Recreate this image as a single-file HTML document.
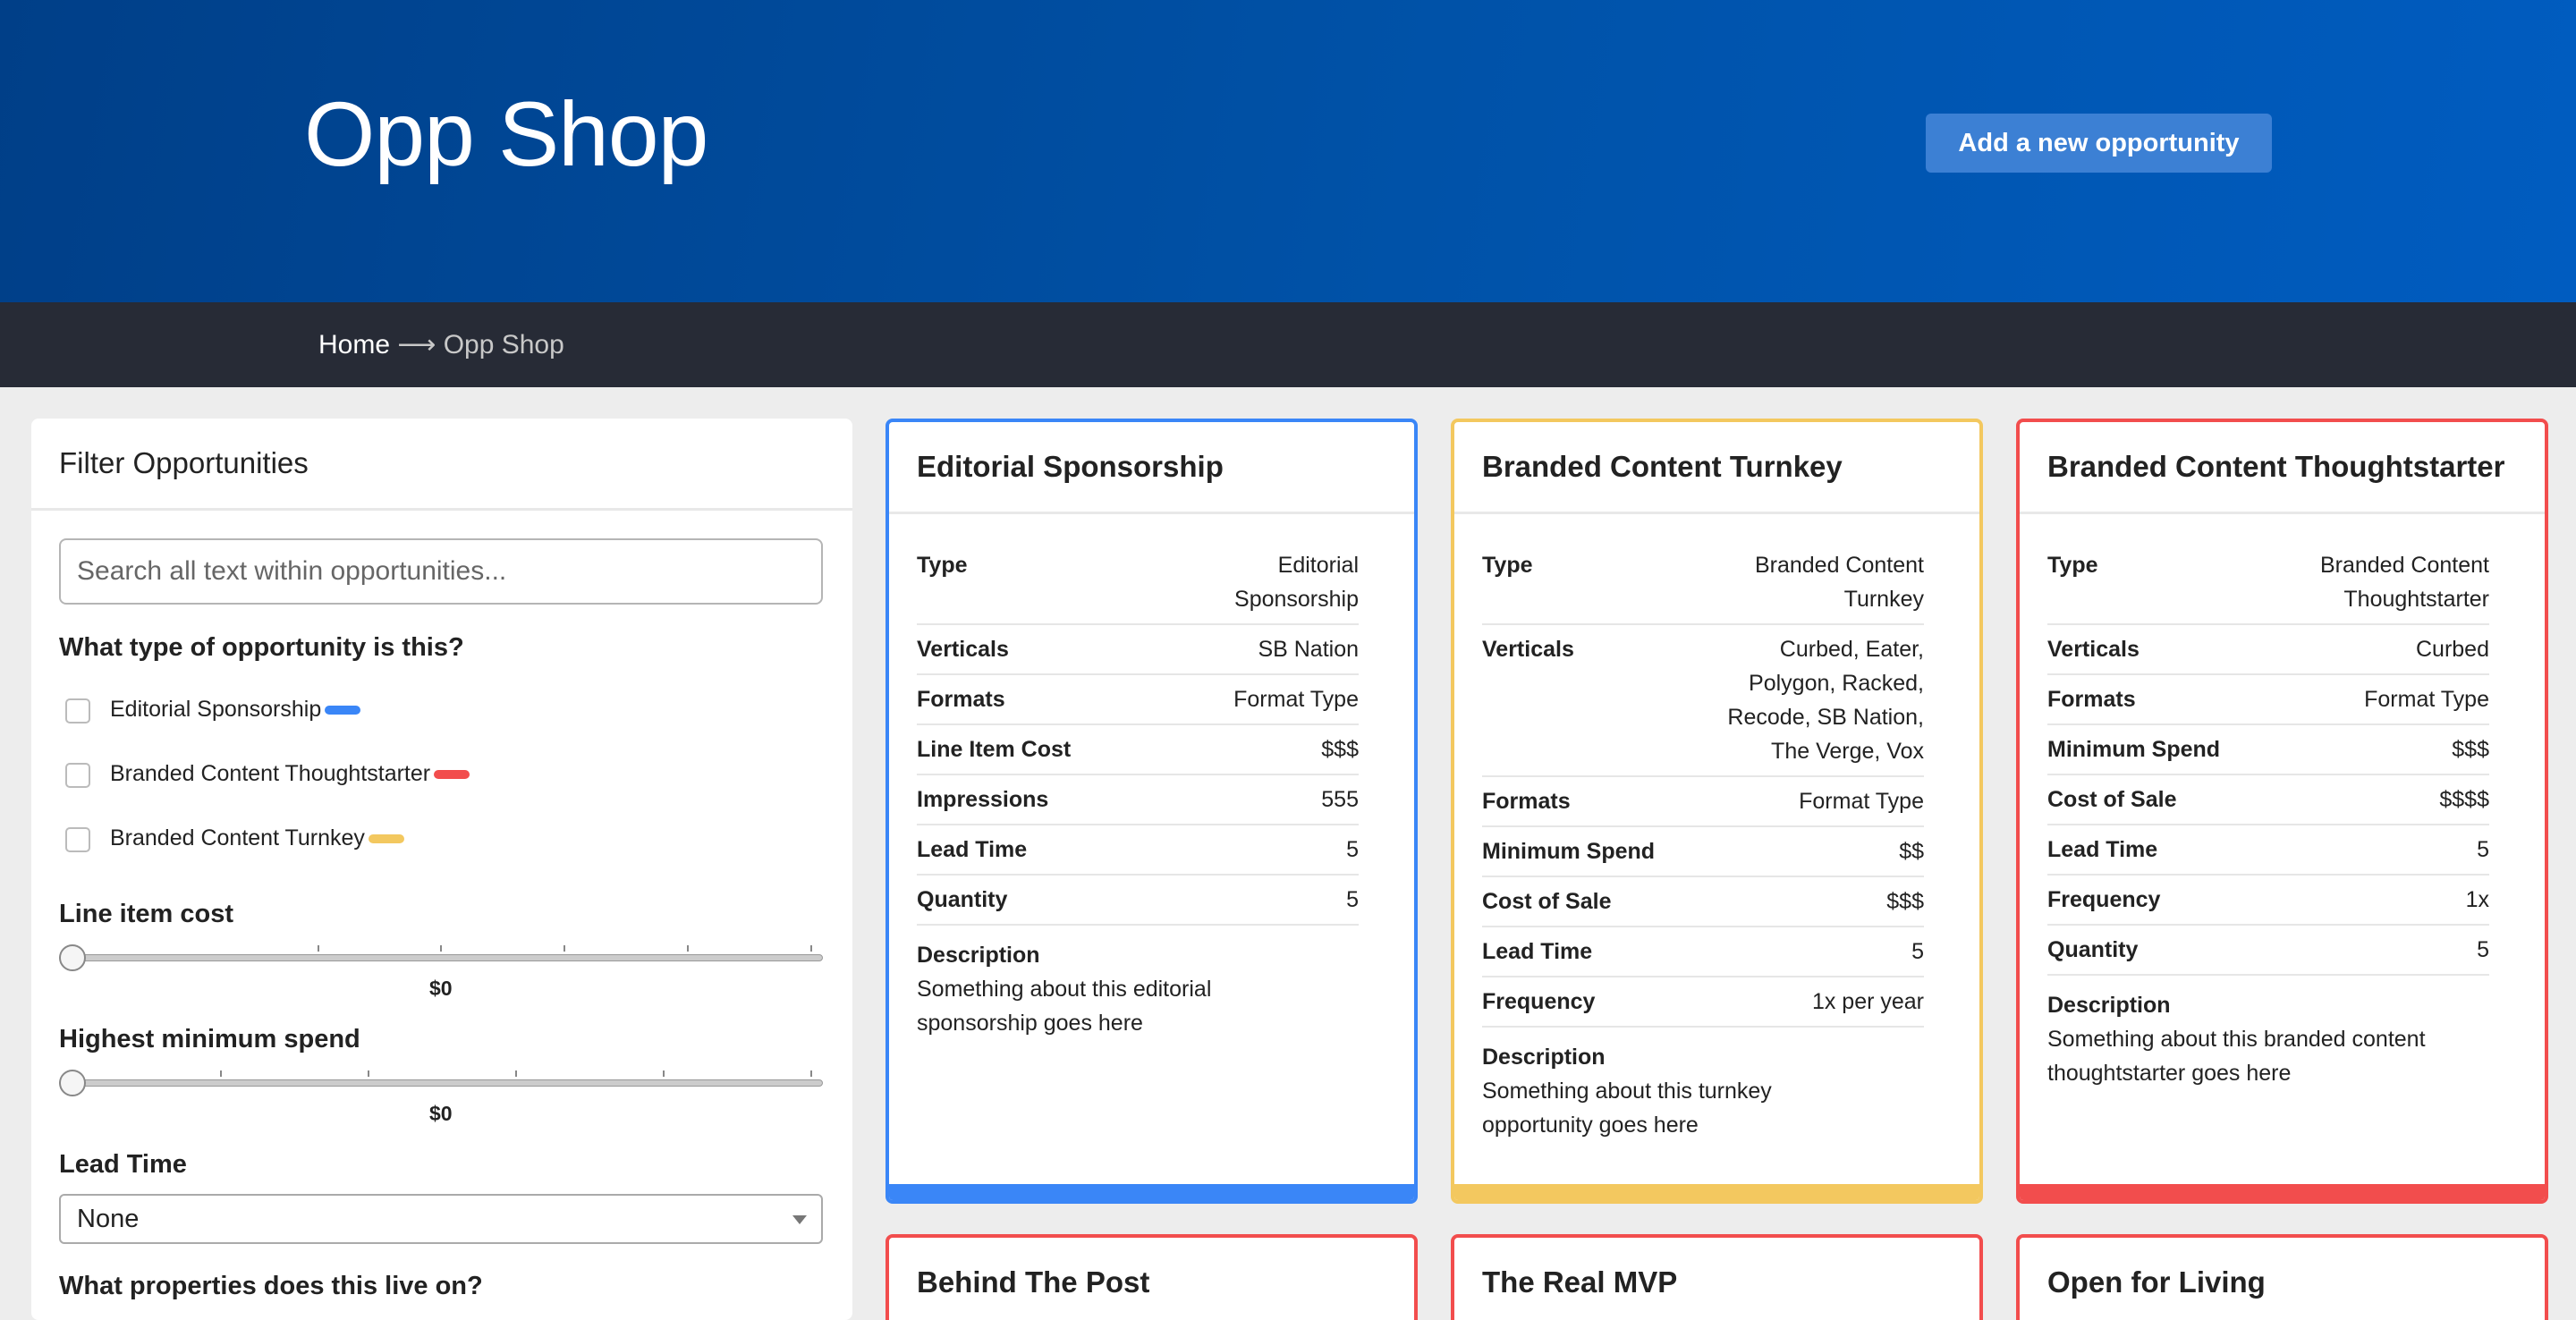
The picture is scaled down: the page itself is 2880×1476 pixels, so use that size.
<!DOCTYPE html>
<html><head><meta charset="utf-8"><style>
*{box-sizing:border-box;margin:0;padding:0}
html,body{width:2880px;height:1476px;overflow:hidden}
body{background:#ededed;font-family:"Liberation Sans",sans-serif;color:#222;position:relative}
.hdr{height:338px;background:linear-gradient(100deg,#003f88 0%,#0052a8 55%,#005cc0 100%);position:relative}
.hdr h1{position:absolute;left:340px;top:92px;font-weight:300;font-size:102px;color:#fff;letter-spacing:-1px}
.btn{position:absolute;left:2153px;top:127px;width:387px;height:66px;background:#3c80d4;border-radius:6px;color:#fff;font-weight:bold;font-size:29px;text-align:center;line-height:66px}
.nav{height:95px;background:#272b36;color:#fff;font-size:30px;line-height:95px;padding-left:356px}
.nav span{color:#c8c8c8}
.side{position:absolute;left:35px;top:468px;width:918px;height:1100px;background:#fff;border-radius:8px}
.side .sh{height:103px;border-bottom:3px solid #e8e8e8;font-size:33px;line-height:100px;padding-left:31px}
.inp{position:absolute;left:31px;top:134px;width:854px;height:74px;border:2px solid #b5b5b5;border-radius:8px;font-size:30px;color:#666;line-height:70px;padding-left:18px}
.q{position:absolute;left:31px;font-weight:bold;font-size:29px}
.cb{position:absolute;left:38px;width:28px;height:28px;border:2px solid #bbb;border-radius:5px}
.cl{position:absolute;left:88px;font-size:25px}
.pill{display:inline-block;width:40px;height:10px;border-radius:5px;vertical-align:middle;margin-left:4px}
.track{position:absolute;left:31px;width:854px;height:8px;background:#ccc;border:1px solid #999;border-radius:4px}
.knob{position:absolute;left:31px;width:30px;height:30px;border-radius:50%;background:#f5f5f5;border:2px solid #888}
.tick{position:absolute;width:2px;height:7px;background:#888}
.val{position:absolute;font-weight:bold;font-size:23px}
.sel{position:absolute;left:31px;top:867px;width:854px;height:56px;border:2px solid #aaa;border-radius:6px;font-size:29px;line-height:52px;padding-left:18px}
.sel:after{content:"";position:absolute;right:16px;top:22px;border:8px solid transparent;border-top:10px solid #777}
.card{position:absolute;width:595px;background:#fff;border:4px solid;border-radius:8px;overflow:hidden}
.card .ch{height:103px;border-bottom:3px solid #e8e8e8;font-weight:bold;font-size:33px;line-height:100px;padding-left:31px}
.card .cbd{padding:30px 62px 0 31px}
.row{display:flex;justify-content:space-between;border-bottom:2px solid #e6e6e6;padding:8px 0;font-size:25px;line-height:38px}
.row span{text-align:right;max-width:250px}
.row span.t{max-width:200px}
.desc{padding-top:14px;font-size:25px;line-height:38px}
.bar{position:absolute;left:0;right:0;bottom:0;height:18px}
</style></head><body>
<div class="hdr"><h1>Opp Shop</h1><div class="btn">Add a new opportunity</div></div>
<div class="nav">Home <span>⟶ Opp Shop</span></div>

<div class="side" style="height:1008px">
<div class="sh">Filter Opportunities</div>
<div class="inp">Search all text within opportunities...</div>
<div class="q" style="top:240px">What type of opportunity is this?</div>
<div class="cb" style="top:313px"></div><div class="cl" style="top:311px">Editorial Sponsorship<span class="pill" style="background:#3a86f7"></span></div>
<div class="cb" style="top:385px"></div><div class="cl" style="top:383px">Branded Content Thoughtstarter<span class="pill" style="background:#f24d4d"></span></div>
<div class="cb" style="top:457px"></div><div class="cl" style="top:455px">Branded Content Turnkey<span class="pill" style="background:#f3c85f"></span></div>
<div class="q" style="top:538px">Line item cost</div>
<div class="tick" style="left:320px;top:589px"></div><div class="tick" style="left:457px;top:589px"></div><div class="tick" style="left:595px;top:589px"></div><div class="tick" style="left:733px;top:589px"></div><div class="tick" style="left:871px;top:589px"></div>
<div class="track" style="top:599px"></div><div class="knob" style="top:588px"></div>
<div class="val" style="left:445px;top:624px">$0</div>
<div class="q" style="top:678px">Highest minimum spend</div>
<div class="tick" style="left:211px;top:729px"></div><div class="tick" style="left:376px;top:729px"></div><div class="tick" style="left:541px;top:729px"></div><div class="tick" style="left:706px;top:729px"></div><div class="tick" style="left:871px;top:729px"></div>
<div class="track" style="top:739px"></div><div class="knob" style="top:728px"></div>
<div class="val" style="left:445px;top:764px">$0</div>
<div class="q" style="top:818px">Lead Time</div>
<div class="sel">None</div>
<div class="q" style="top:954px">What properties does this live on?</div>
</div>

<div class="card" style="left:990px;top:468px;height:878px;border-color:#3a86f7">
<div class="ch">Editorial Sponsorship</div>
<div class="cbd">
<div class="row"><b>Type</b><span class="t">Editorial Sponsorship</span></div>
<div class="row"><b>Verticals</b><span>SB Nation</span></div>
<div class="row"><b>Formats</b><span>Format Type</span></div>
<div class="row"><b>Line Item Cost</b><span>$$$</span></div>
<div class="row"><b>Impressions</b><span>555</span></div>
<div class="row"><b>Lead Time</b><span>5</span></div>
<div class="row"><b>Quantity</b><span>5</span></div>
<div class="desc"><b>Description</b><br>Something about this editorial<br>sponsorship goes here</div>
</div><div class="bar" style="background:#3a86f7"></div></div>

<div class="card" style="left:1622px;top:468px;height:878px;border-color:#f3c85f">
<div class="ch">Branded Content Turnkey</div>
<div class="cbd">
<div class="row"><b>Type</b><span class="t">Branded Content Turnkey</span></div>
<div class="row"><b>Verticals</b><span>Curbed, Eater, Polygon, Racked, Recode, SB Nation, The Verge, Vox</span></div>
<div class="row"><b>Formats</b><span>Format Type</span></div>
<div class="row"><b>Minimum Spend</b><span>$$</span></div>
<div class="row"><b>Cost of Sale</b><span>$$$</span></div>
<div class="row"><b>Lead Time</b><span>5</span></div>
<div class="row"><b>Frequency</b><span>1x per year</span></div>
<div class="desc"><b>Description</b><br>Something about this turnkey<br>opportunity goes here</div>
</div><div class="bar" style="background:#f3c85f"></div></div>

<div class="card" style="left:2254px;top:468px;height:878px;border-color:#f24d4d">
<div class="ch">Branded Content Thoughtstarter</div>
<div class="cbd">
<div class="row"><b>Type</b><span class="t">Branded Content Thoughtstarter</span></div>
<div class="row"><b>Verticals</b><span>Curbed</span></div>
<div class="row"><b>Formats</b><span>Format Type</span></div>
<div class="row"><b>Minimum Spend</b><span>$$$</span></div>
<div class="row"><b>Cost of Sale</b><span>$$$$</span></div>
<div class="row"><b>Lead Time</b><span>5</span></div>
<div class="row"><b>Frequency</b><span>1x</span></div>
<div class="row"><b>Quantity</b><span>5</span></div>
<div class="desc"><b>Description</b><br>Something about this branded content<br>thoughtstarter goes here</div>
</div><div class="bar" style="background:#f24d4d"></div></div>

<div class="card" style="left:990px;top:1380px;height:120px;border-color:#f24d4d"><div class="ch">Behind The Post</div></div>
<div class="card" style="left:1622px;top:1380px;height:120px;border-color:#f24d4d"><div class="ch">The Real MVP</div></div>
<div class="card" style="left:2254px;top:1380px;height:120px;border-color:#f24d4d"><div class="ch">Open for Living</div></div>
</body></html>
